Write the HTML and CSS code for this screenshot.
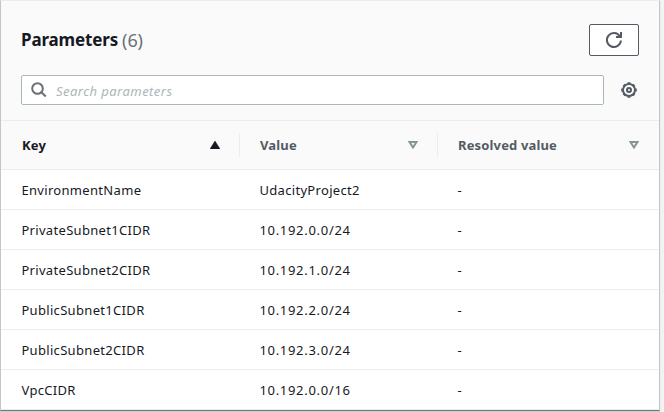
FILE: index.html
```html
<!DOCTYPE html>
<html lang="en">
<head>
<meta charset="utf-8">
<title>Parameters</title>
<link rel="stylesheet" href="styles.css">
</head>
<body>
<section class="card">
  <header class="toolbar">
    <div class="title-row">
      <h2><span class="title">Parameters</span><span class="count">(6)</span></h2>
      <button class="refresh" aria-label="Refresh">
        <svg width="18" height="18" viewBox="0 0 18 18" fill="none" stroke="currentColor" stroke-width="2"><path d="M15.900 9.500A7 7 0 1 1 14.800 5.200"/><path d="M16 1v5h-5"/></svg>
      </button>
    </div>
    <div class="search-row">
      <label class="search">
        <svg width="16" height="16" viewBox="0 0 16 16" fill="none" stroke="currentColor" stroke-width="2"><circle cx="6.5" cy="6.5" r="5.3"/><path d="M10.300 10.300l4.500 4.200"/></svg>
        <input type="text" placeholder="Search parameters">
      </label>
      <svg class="gear" width="16" height="16" viewBox="0 0 16 16" fill="none" stroke="currentColor"><circle cx="8" cy="8" r="6" stroke-width="2"/><path d="M6.500 1h3M6.500 15h3M1 6.500v3M15 6.500v3M2.300 4.200l1.900-1.900M11.800 2.300l1.900 1.900M2.300 11.800l1.900 1.900M11.800 13.700l1.900-1.900" stroke-width="1.600"/><circle cx="8" cy="8" r="2" stroke-width="2"/></svg>
    </div>
  </header>
  <div class="grid head">
    <div class="active"><span>Key</span><svg width="10" height="8" viewBox="0 0 10 8"><path d="M5 0l5 8H0z" fill="currentColor" stroke="currentColor" stroke-width=".5"/></svg></div>
    <div><span>Value</span><svg width="10" height="8" viewBox="0 0 10 8" fill="none"><path d="M1.500 1h7L5 6.500z" stroke="#879596" stroke-width="2"/></svg></div>
    <div><span>Resolved value</span><svg width="10" height="8" viewBox="0 0 10 8" fill="none"><path d="M1.500 1h7L5 6.500z" stroke="#879596" stroke-width="2"/></svg></div>
  </div>
  <div class="rows">
    <div class="grid row"><span>EnvironmentName</span><span>UdacityProject2</span><span>-</span></div>
    <div class="grid row"><span>PrivateSubnet1CIDR</span><span class="ip">10.192.0.0/24</span><span>-</span></div>
    <div class="grid row"><span>PrivateSubnet2CIDR</span><span class="ip">10.192.1.0/24</span><span>-</span></div>
    <div class="grid row"><span>PublicSubnet1CIDR</span><span class="ip">10.192.2.0/24</span><span>-</span></div>
    <div class="grid row"><span>PublicSubnet2CIDR</span><span class="ip">10.192.3.0/24</span><span>-</span></div>
    <div class="grid row"><span>VpcCIDR</span><span class="ip">10.192.0.0/16</span><span>-</span></div>
  </div>
</section>
</body>
</html>
```
FILE: styles.css
```css
* { box-sizing: border-box; }
body {
  margin: 0;
  height: 412px;
  overflow: hidden;
  background: #f2f3f3;
  color: #16191f;
  font: 13px/20px "Noto Sans", sans-serif;
}
.card {
  width: 660px;
  height: 411px;
  background: #fff;
  border: 1px solid #bfc7ca;
  border-top-color: #eaeded;
  border-bottom-color: #687c7d;
  box-shadow: 0 1px 1px #c9cfd0;
}
.toolbar {
  height: 120px;
  padding: 23px 20px 0;
  background: #fafafa;
  border-bottom: 1px solid #eaeded;
}
.title-row { display: flex; justify-content: space-between; height: 51px; }
h2 { display: flex; gap: 4px; margin: 0; font-size: 17px; line-height: 32px; }
.title { font-weight: 700; letter-spacing: -.15px; }
.count { font-size: 18px; font-weight: 400; letter-spacing: -.1px; color: #687078; }
.refresh {
  display: flex;
  align-items: center;
  justify-content: center;
  width: 50px;
  height: 32px;
  padding: 0;
  color: #545b64;
  background: #fff;
  border: 1px solid #545b64;
  border-radius: 2px;
}
.search-row { display: flex; align-items: center; gap: 17px; }
.search {
  display: flex;
  align-items: center;
  gap: 9px;
  width: 583px;
  height: 30px;
  padding-left: 9px;
  color: #687078;
  background: #fff;
  border: 1px solid #aab7b8;
  border-radius: 2px;
}
.search input {
  flex: 1;
  min-width: 0;
  padding: 1px 0 0;
  border: 0;
  outline: 0;
  background: transparent;
  font: 13px/20px "Noto Sans", sans-serif;
  letter-spacing: .45px;
}
.search input::placeholder { color: #aab7b8; font-style: italic; opacity: 1; }
.gear { color: #545b64; }
.grid { display: grid; grid-template-columns: 238px 198px 1fr; }
.head {
  height: 49px;
  align-items: center;
  background: #fafafa;
  border-bottom: 1px solid #eaeded;
  color: #545b64;
  font-weight: 700;
  letter-spacing: .15px;
}
.head > div {
  display: flex;
  align-items: center;
  justify-content: space-between;
  height: 24px;
  padding: 0 19px 0 20px;
  border-left: 1px solid #eaeded;
}
.head > div:first-child { border-left-color: transparent; padding-right: 19px; }
.head > div:last-child { padding-right: 20px; }
.head .active { color: #16191f; }
.rows { padding-right: 1px; }
.row { height: 40px; line-height: 40px; border-bottom: 1px solid #eaeded; letter-spacing: .32px; }
.row span { padding-left: 20.4px; }
.row .ip { letter-spacing: .7px; }
```
